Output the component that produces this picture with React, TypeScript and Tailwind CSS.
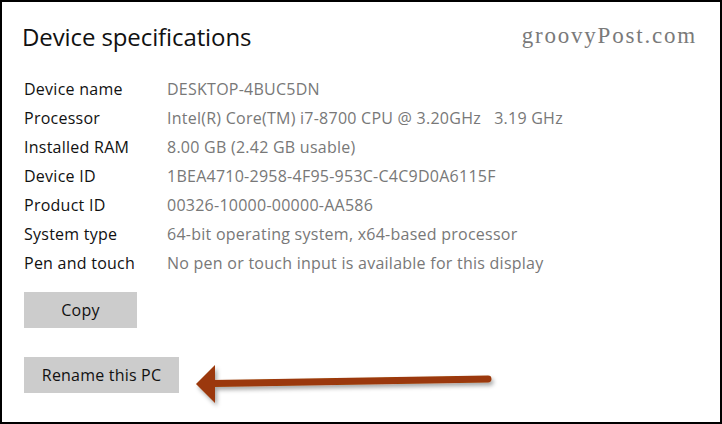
import React from 'react';

const specs = [
    { label: "Device name", value: "DESKTOP-4BUC5DN" },
    { label: "Processor", value: "Intel(R) Core(TM) i7-8700 CPU @ 3.20GHz\u00a0\u00a0 3.19 GHz" },
    { label: "Installed RAM", value: "8.00 GB (2.42 GB usable)" },
    { label: "Device ID", value: "1BEA4710-2958-4F95-953C-C4C9D0A6115F" },
    { label: "Product ID", value: "00326-10000-00000-AA586" },
    { label: "System type", value: "64-bit operating system, x64-based processor" },
    { label: "Pen and touch", value: "No pen or touch input is available for this display" },
];

const Arrow = () => (
    <svg className="absolute inset-0 pointer-events-none" width="722" height="424" viewBox="0 0 722 424">
        <defs>
            <filter id="arrowShadow" x="-10%" y="-50%" width="120%" height="200%">
                <feDropShadow dx="2" dy="3" stdDeviation="2" floodColor="#000" floodOpacity="0.35" />
            </filter>
        </defs>
        <g filter="url(#arrowShadow)">
            <line x1="488" y1="379" x2="212" y2="383.5" stroke="#9b3907" strokeWidth="7" strokeLinecap="round" />
            <polygon points="196,384 215,365 215,403" fill="#9b3907" />
        </g>
    </svg>
);

export default function App() {
    return (
        <div className="relative w-[722px] h-[424px] bg-white">
            <div className="w-full h-full border-2 border-black pl-[21px] pr-[24px] pt-[19px] font-['Open_Sans',sans-serif]">
                <div className="flex items-center justify-between h-8">
                    <h1 className="text-[24px] leading-8 text-[#111] tracking-[-0.1px] -ml-[1px]">Device specifications</h1>
                    <span className="font-['Liberation_Serif',serif] text-[23px] tracking-[1.8px] text-[#7a7a7a] mt-[-2px] -mr-[1px]">groovyPost.com</span>
                </div>

                <div className="mt-[21px] pl-px">
                    {specs.map((row) => (
                        <div key={row.label} className="flex h-[29px] items-center text-[16px] tracking-[0.25px]">
                            <span className="w-[143px] shrink-0 text-[#111]">{row.label}</span>
                            <span className="text-[#787878] whitespace-nowrap">{row.value}</span>
                        </div>
                    ))}
                </div>

                <div className="mt-[15px] flex flex-col items-start gap-[29px] pl-px">
                    <button className="w-[113px] h-9 bg-[#cccccc] text-[16px] tracking-[0.2px] text-[#111]">Copy</button>
                    <button className="w-[155px] h-9 bg-[#cccccc] text-[16px] tracking-[0.2px] text-[#111]">Rename this PC</button>
                </div>
            </div>
            <Arrow />
        </div>
    );
}
